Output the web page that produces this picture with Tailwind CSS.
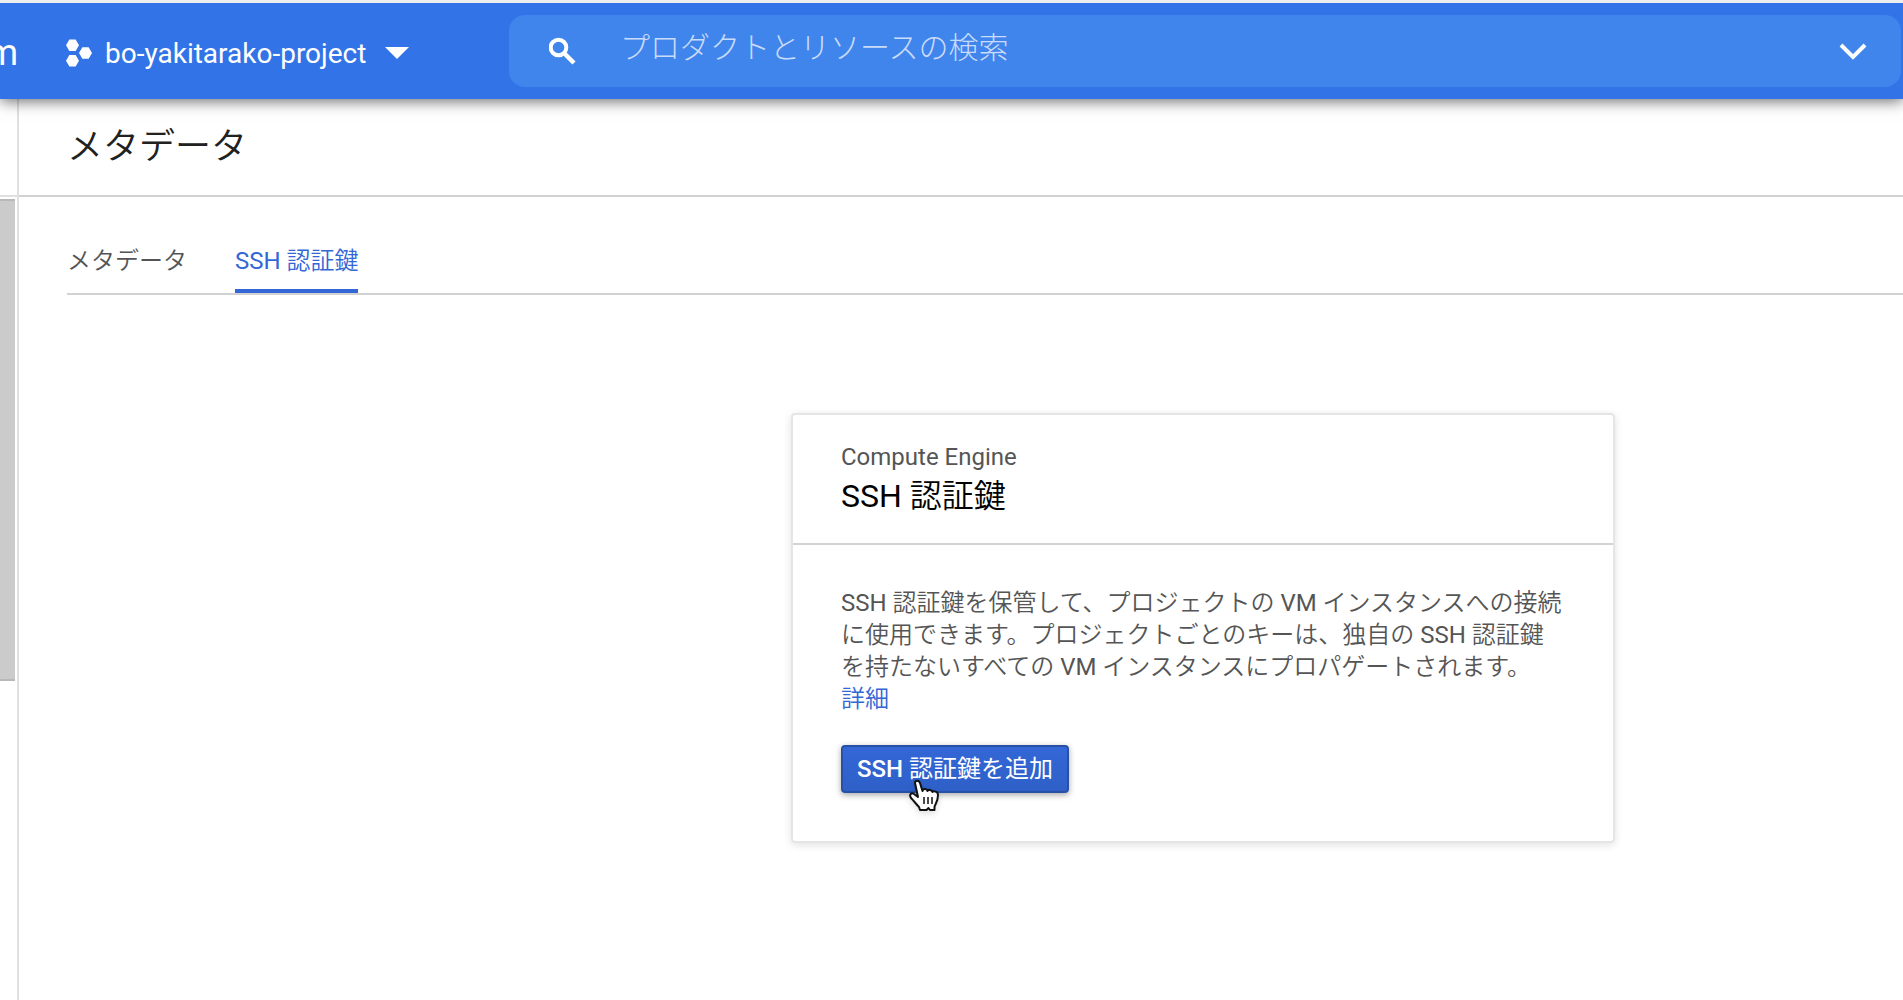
<!DOCTYPE html>
<html lang="ja">
<head>
<meta charset="utf-8">
<title>メタデータ</title>
<script src="https://cdn.jsdelivr.net/npm/@tailwindcss/browser@4"></script>
</head>
<body class="flex h-screen flex-col overflow-hidden bg-white font-[Roboto,'Noto_Sans_CJK_JP',sans-serif] text-2xl text-[#555]">
  <header class="relative z-10 flex h-[99px] shrink-0 items-center border-t-3 border-[#eee] bg-[#3273e7] pr-0.5 text-white shadow-[0_2px_14px_rgba(0,0,0,0.6)]">
    <a href="#" class="flex w-[18px] shrink-0 justify-end overflow-hidden pt-1 text-4xl">m</a>
    <button type="button" class="ml-12 flex w-[443px] shrink-0 items-center pt-1 text-[28px] leading-9">
      <svg class="mr-[13px] h-7 w-[26px]" viewBox="0 0 27 28" fill="white" aria-hidden="true">
        <path d="M3.500 0h6.500l3.500 6-3.500 6H3.500L0 6zM3.500 16h6.500l3.500 6-3.500 6H3.500L0 22zM17 8h6.500L27 14l-3.500 6H17l-3.500-6z"/>
      </svg>
      <span class="pt-0.5">bo-yakitarako-project</span>
      <svg class="ml-[19px] h-3 w-6" viewBox="0 0 24 12" fill="white" aria-hidden="true"><path d="M0 0h24L12 12z"/></svg>
    </button>
    <div class="flex h-[72px] min-w-0 flex-1 items-center rounded-2xl bg-[#4085ec] pr-[34px] pl-10">
      <svg class="h-7 w-[27px] shrink-0" viewBox="0 0 27 28" fill="none" stroke="white" stroke-width="4" aria-hidden="true">
        <circle cx="9.500" cy="10.500" r="7.800"/><path d="M15 16l10 10" stroke-width="4.500"/>
      </svg>
      <input type="text" aria-label="プロダクトとリソースの検索" placeholder="プロダクトとリソースの検索" class="ml-11 h-full min-w-0 flex-1 bg-transparent pb-2 text-[30px] font-light outline-none placeholder:text-[#c9dbfa]">
      <button type="button" aria-label="開く" class="pt-0.5">
        <svg class="h-[18px] w-7" viewBox="0 0 28 18" fill="none" stroke="white" stroke-width="4" aria-hidden="true"><path d="M2 2l12 12L26 2"/></svg>
      </button>
    </div>
  </header>

  <div class="flex min-h-0 flex-1">
    <aside class="w-[19px] shrink-0 border-r-2 border-[#e0e0e0]">
      <div class="h-[98px] border-b-2 border-[#e0e0e0]"></div>
      <div class="mt-0.5 h-[482px] w-[15px] border-y-2 border-[#b8b8b8] bg-[#cbcbcb]"></div>
    </aside>
    <main class="min-w-0 flex-1">
      <div class="flex h-[98px] items-center border-b-2 border-[#d2d2d2] pl-12">
        <h1 class="text-4xl font-[350] text-[#212121]">メタデータ</h1>
      </div>
      <div class="pl-12">
        <nav class="flex h-[98px] gap-12 border-b-2 border-[#d2d2d2] font-[350]">
          <a href="#" class="flex items-end border-b-4 border-transparent pb-3">メタデータ</a>
          <a href="#" class="flex items-end border-b-4 border-[#3367d6] pb-3 text-[#3367d6]"><span><span class="font-normal">SSH</span> 認証鍵</span></a>
        </nav>
        <section class="mt-[118px] ml-[724px] w-[824px] rounded-sm border-2 border-[#e5e5e5] shadow-[0_2px_8px_rgba(0,0,0,0.12)]">
          <div class="h-[130px] border-b-2 border-[#d2d2d2] px-12 pt-6">
            <p class="leading-9">Compute Engine</p>
            <h2 class="text-[32px] leading-[42px] font-[350] text-black"><span class="font-normal">SSH</span> 認証鍵</h2>
          </div>
          <div class="px-12 pt-[42px] pb-12">
            <p class="leading-8 font-[350]"><span class="font-normal">SSH</span> 認証鍵を保管して、プロジェクトの <span class="font-normal">VM</span> インスタンスへの接続<br>に使用できます。プロジェクトごとのキーは、独自の <span class="font-normal">SSH</span> 認証鍵<br>を持たないすべての <span class="font-normal">VM</span> インスタンスにプロパゲートされます。<br><a href="#" class="text-[#3367d6]">詳細</a></p>
            <div class="relative mt-[30px] w-fit">
              <button type="button" class="block h-12 rounded-sm border-2 border-[#2850a7] bg-linear-to-b from-[#3367d6] to-[#2f60c8] px-3.5 leading-10 text-white shadow-[0_2px_6px_rgba(0,0,0,0.35)]"><span class="font-medium">SSH</span> 認証鍵を追加</button>
              <svg class="absolute top-[34px] left-[67px] h-9 w-8 drop-shadow-md" viewBox="0 0 32 36" fill="white" stroke="#111" stroke-width="2" stroke-linejoin="round" aria-hidden="true">
                <path d="M7 4C7 1 11 1 12 4L14.500 12C15 9 19 9.500 19.500 12C20 10 24 11 24.500 13C25 12 30 12 30 16C30 23 27 25 26.500 28V31L22 31L20.500 29L18.500 31H12L11 28C8 25 6 22 3 19C1 16 3 13 6 15L10 18z"/>
                <path d="M16 18v7M20 18v7M24 18v7" stroke-width="1.500"/>
              </svg>
            </div>
          </div>
        </section>
      </div>
    </main>
  </div>
</body>
</html>
